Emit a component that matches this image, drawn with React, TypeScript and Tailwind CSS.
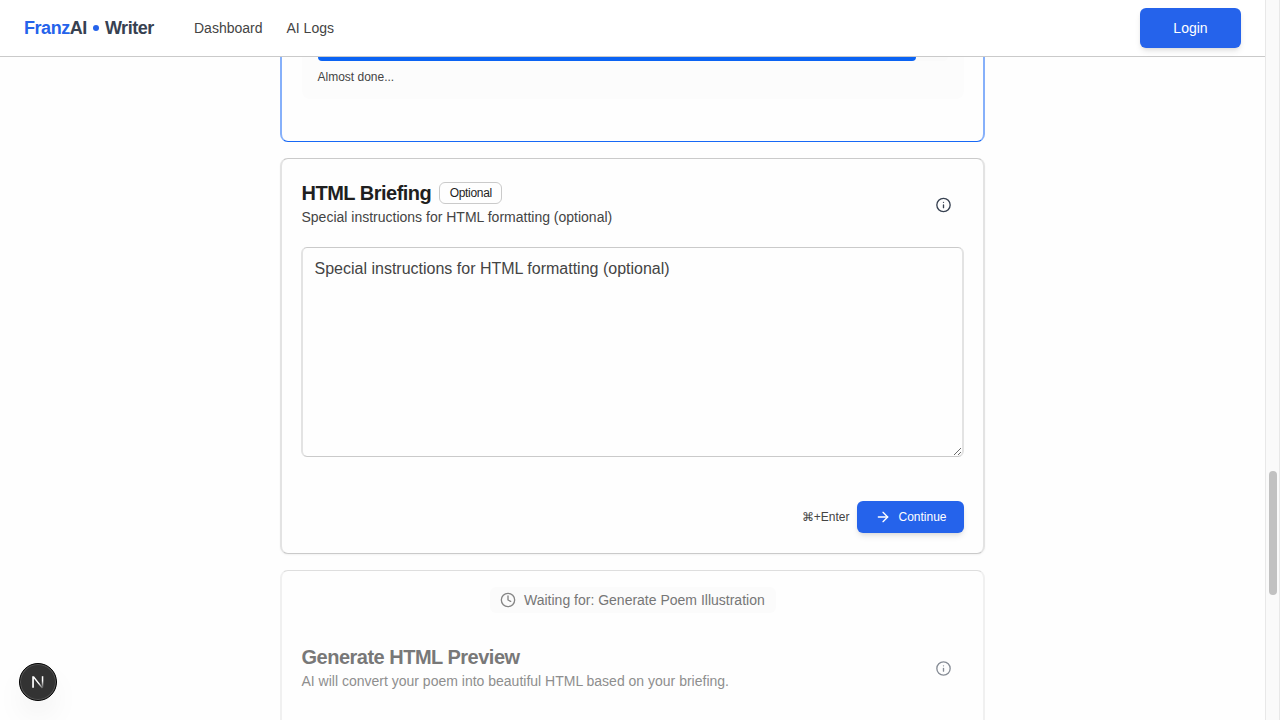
import { ArrowRight, Clock, Info } from "lucide-react";

function Header() {
  return (
    <header className="flex h-[57px] shrink-0 items-center border-b border-[#cacaca] bg-white pr-6 pl-6">
      <div className="flex w-[130px] items-center text-lg leading-7 font-bold tracking-tight whitespace-nowrap text-[#374151]">
        <span className="text-[#2563eb]">Franz</span>AI
        <span className="mr-[6px] ml-[6px] size-1.5 rounded-full bg-[#2563eb]" />
        Writer
      </div>
      <nav className="ml-10 flex gap-6 text-sm text-[#444444]">
        <a>Dashboard</a>
        <a>AI Logs</a>
      </nav>
      <button className="ml-auto h-10 w-[101px] rounded-md bg-[#2563eb] text-sm text-white shadow-md shadow-black/10">
        Login
      </button>
    </header>
  );
}

function ProgressCard() {
  return (
    <section className="h-[85px] rounded-b-lg border-x-2 border-b border-x-[#86b0fa] border-b-[#1768f5] bg-[#fefefe] px-[19.5px]">
      <div className="h-[42px] rounded-b-lg bg-[#fcfcfc] px-4">
        <div className="h-1 w-[630px] rounded-b-full bg-[#fafafa]">
          <div className="h-1 w-[598px] rounded-b bg-[#0b63f3]" />
        </div>
        <p className="mt-2 text-xs text-[#444444]">Almost done...</p>
      </div>
    </section>
  );
}

function BriefingCard() {
  return (
    <section className="mt-4 h-[396px] rounded-lg border-x-2 border-y border-x-[#e3e3e3] border-y-[#cacaca] bg-[#fefefe] px-[19.5px] pt-5 shadow-xs">
      <div className="flex h-[68px] justify-between">
        <div>
          <div className="flex h-7 items-center gap-2">
            <h2 className="text-xl font-bold tracking-tight text-[#1f1f1f]">HTML Briefing</h2>
            <span className="flex h-[22px] w-[63px] items-center justify-center rounded-md border border-[#cacaca] text-xs tracking-tight text-[#1f1f1f]">
              Optional
            </span>
          </div>
          <p className="text-sm text-[#444444]">Special instructions for HTML formatting (optional)</p>
        </div>
        <Info className="mt-[18px] mr-[12.5px] size-4 translate-x-[0.5px] text-[#374151]" />
      </div>
      <div className="relative -ml-[0.5px] h-[210px] rounded-md border-x-2 border-y border-x-[#e3e3e3] border-y-[#cacaca] px-[11.5px] py-[9px] text-base leading-6 text-[#444444]">
        Special instructions for HTML formatting (optional)
        <svg className="absolute right-0 bottom-0" width="9" height="9" viewBox="0 0 9 9" fill="none" stroke="#5a5a5a" strokeWidth="0.9">
          <path d="M1 8 8 1M5 8l3-3" />
        </svg>
      </div>
      <div className="mt-11 flex items-center justify-end gap-[7.5px] text-xs">
        <span className="text-[#444444]">⌘+Enter</span>
        <button className="flex h-8 w-[106.5px] items-center gap-2 rounded-md bg-[#2563eb] pl-[17.5px] text-white shadow-md shadow-black/10">
          <ArrowRight className="size-4" />
          Continue
        </button>
      </div>
    </section>
  );
}

function PreviewCard() {
  return (
    <section className="mt-4 h-[200px] shrink-0 rounded-t-lg border-x-2 border-t border-x-[#f0f0f0] border-t-[#dedede] bg-[#fefefe] px-[19.5px] pt-4">
      <div className="mx-auto flex h-[26px] w-[286px] items-center gap-[8.5px] rounded-md bg-[#fbfbfb] pl-2.5 text-sm whitespace-nowrap text-[#767676]">
        <Clock className="size-4 text-[#858585]" />
        Waiting for: Generate Poem Illustration
      </div>
      <div className="mt-[30px] flex justify-between">
        <div>
          <h2 className="text-xl font-bold tracking-tight text-[#787878]">Generate HTML Preview</h2>
          <p className="text-sm text-[#8e8e8e]">AI will convert your poem into beautiful HTML based on your briefing.</p>
        </div>
        <Info className="mt-[17px] mr-[12.5px] size-4 translate-x-[0.5px] translate-y-[0.5px] text-[#878d96]" />
      </div>
    </section>
  );
}

function DevBadge() {
  return (
    <div className="absolute top-[663px] left-[19px] flex size-[38px] items-center justify-center rounded-full border border-black bg-[#333333] shadow-[inset_0_0_0_1px_#555,0_16px_32px_-8px_rgba(0,0,0,0.13)]">
      <svg width="14" height="14" viewBox="0 0 14 14" fill="none">
        <defs>
          <linearGradient id="leg" x1="0" y1="0" x2="0" y2="1">
            <stop offset="0.4" stopColor="#fff" />
            <stop offset="1" stopColor="#fff" stopOpacity="0.1" />
          </linearGradient>
          <linearGradient id="diagonal" x1="0" y1="0" x2="1" y2="1">
            <stop offset="0.6" stopColor="#fff" />
            <stop offset="1" stopColor="#fff" stopOpacity="0.1" />
          </linearGradient>
        </defs>
        <path d="M1.2 12.8V1.2H3L12 12.7l-1.1.8L2.9 3.6v9.2z" fill="url(#diagonal)" />
        <path d="M10.8 1.2h1.5v11.5h-1.5z" fill="url(#leg)" />
      </svg>
    </div>
  );
}

export default function App() {
  return (
    <div className="relative flex h-[720px] w-[1280px] overflow-hidden bg-[#fefefe] font-['Liberation_Sans',Arial,sans-serif]">
      <div className="flex w-[1265px] flex-col overflow-hidden">
        <Header />
        <main className="ml-[280px] flex w-[705px] flex-col">
          <ProgressCard />
          <BriefingCard />
          <PreviewCard />
        </main>
      </div>
      <aside className="w-[15px] border-x border-[#e8e8e8] bg-[#fafafa] pt-[470.5px] pl-[3px]">
        <div className="h-[124.5px] w-2 rounded-full bg-[#c1c1c1]" />
      </aside>
      <DevBadge />
    </div>
  );
}
